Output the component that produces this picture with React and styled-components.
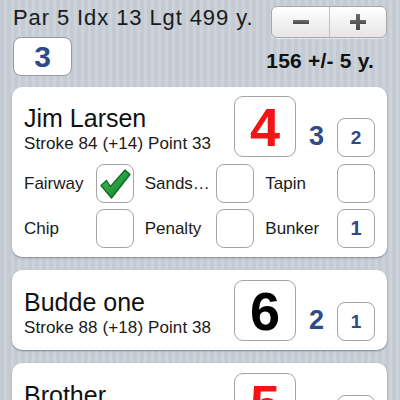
import React from "react";
import styled, { createGlobalStyle } from "styled-components";

const Global = createGlobalStyle`
  html, body { margin: 0; padding: 0; }
  body {
    width: 400px;
    height: 400px;
    overflow: hidden;
    font-family: "Liberation Sans", Arial, sans-serif;
    color: #111;
    background: repeating-linear-gradient(90deg, #c4cbd3 0px, #c4cbd3 4px, #ccd3da 4px, #ccd3da 7px);
  }
`;

const Page = styled.div`
  display: flex;
  flex-direction: column;
  gap: 13px;
  padding: 0 13px 0 12px;
`;

const Header = styled.div`
  display: flex;
  justify-content: space-between;
  align-items: flex-start;
  padding-top: 5px;
  margin-bottom: -2px;
`;

const HeaderLeft = styled.div`
  display: flex;
  flex-direction: column;
  gap: 7px;
  padding-left: 1px;
`;

const Title = styled.div`
  font-size: 22px;
  line-height: 25px;
  letter-spacing: 0.9px;
  white-space: nowrap;
  color: #1a1a1a;
`;

const HoleBox = styled.div`
  width: 57px;
  height: 37px;
  border: 1px solid #9a9a9a;
  border-radius: 8px;
  background: #fff;
  display: flex;
  align-items: center;
  justify-content: center;
  font-weight: bold;
  font-size: 30px;
  color: #2d4b86;
`;

const HeaderRight = styled.div`
  display: flex;
  flex-direction: column;
  align-items: flex-end;
  gap: 11px;
  padding-top: 1px;
`;

const Stepper = styled.div`
  width: 114px;
  height: 30px;
  border: 1px solid #a8a8a8;
  border-radius: 6px;
  background: linear-gradient(#ffffff, #e6e6e6);
  display: grid;
  grid-template-columns: 1fr 1fr;
  overflow: hidden;
  box-shadow: 0 1px 0 rgba(255,255,255,0.5);
`;

const StepButton = styled.div`
  display: flex;
  align-items: center;
  justify-content: center;
  border-left: ${(p) => (p.$divided ? "1px solid #c2c2c2" : "none")};
`;

const Distance = styled.div`
  font-weight: bold;
  font-size: 21px;
  line-height: 23px;
  letter-spacing: 0.2px;
  padding-right: 13px;
  white-space: nowrap;
  color: #111;
`;

const Card = styled.div`
  background: #fff;
  border-radius: 10px;
  box-shadow: 0 1px 2px rgba(0, 0, 0, 0.35);
  padding: ${(p) => (p.$expanded ? "9px 12px 9px 12px" : "10px 12px 9px 12px")};
  display: flex;
  flex-direction: column;
  gap: 7px;
`;

const TopRow = styled.div`
  display: flex;
  align-items: flex-end;
`;

const NameBlock = styled.div`
  flex: 1;
  display: flex;
  flex-direction: column;
  padding-bottom: 3px;
  white-space: nowrap;
`;

const Name = styled.div`
  font-size: 25px;
  line-height: 29px;
  color: #111;
`;

const Stats = styled.div`
  font-size: 17px;
  line-height: 21px;
  letter-spacing: 0.1px;
  color: #1a1a1a;
`;

const ScoreBox = styled.div`
  width: 60px;
  height: 59px;
  border: 1px solid #a4a4a4;
  border-radius: 9px;
  display: flex;
  align-items: center;
  justify-content: center;
  font-weight: bold;
  font-size: 54px;
  color: ${(p) => p.$color};
`;

const Putts = styled.div`
  width: 41px;
  text-align: center;
  font-weight: bold;
  font-size: 27px;
  line-height: 27px;
  padding-bottom: 7px;
  color: #2d4b86;
`;

const SmallBox = styled.div`
  width: 36px;
  height: 37px;
  border: 1px solid #a4a4a4;
  border-radius: 8px;
  display: flex;
  align-items: center;
  justify-content: center;
  font-weight: bold;
  font-size: 19px;
  color: #2d4b86;
  background: #fff;
`;

const OptionGrid = styled.div`
  display: grid;
  grid-template-columns: repeat(3, 1fr);
  column-gap: 11px;
  row-gap: 6px;
`;

const Option = styled.div`
  display: flex;
  align-items: center;
  justify-content: space-between;
  min-width: 0;
`;

const OptionLabel = styled.div`
  font-size: 17px;
  color: #1a1a1a;
  white-space: nowrap;
  overflow: hidden;
  text-overflow: ellipsis;
  flex: 1;
  min-width: 0;
  padding-right: 4px;
`;

const Check = styled.div`
  flex: none;
  width: 36px;
  height: 37px;
  border: 1px solid #a4a4a4;
  border-radius: 8px;
  display: flex;
  align-items: center;
  justify-content: center;
  font-weight: bold;
  font-size: 20px;
  color: #2d4b86;
  background: #fff;
`;

const MinusIcon = () => (
  <svg width="18" height="18" viewBox="0 0 18 18">
    <defs>
      <linearGradient id="ig" x1="0" y1="0" x2="0" y2="1">
        <stop offset="0" stopColor="#6a6a6a" />
        <stop offset="1" stopColor="#4a4a4a" />
      </linearGradient>
    </defs>
    <rect x="1" y="7" width="16" height="4" rx="0.5" fill="url(#ig)" />
  </svg>
);

const PlusIcon = () => (
  <svg width="18" height="18" viewBox="0 0 18 18">
    <rect x="1" y="7" width="16" height="4" rx="0.5" fill="url(#ig)" />
    <rect x="7" y="1" width="4" height="16" rx="0.5" fill="url(#ig)" />
  </svg>
);

const CheckMark = () => (
  <svg width="36" height="37" viewBox="0 0 36 37">
    <defs>
      <linearGradient id="cg" x1="0" y1="0" x2="1" y2="1">
        <stop offset="0" stopColor="#4cc45e" />
        <stop offset="0.6" stopColor="#21973a" />
        <stop offset="1" stopColor="#137a2a" />
      </linearGradient>
    </defs>
    <path
      d="M4 20.5 L9.5 15.5 L13.5 21.5 L28 5 L33 9.5 L14.5 33 Z"
      fill="url(#cg)"
      stroke="#0f6a24"
      strokeWidth="1.3"
      strokeLinejoin="round"
    />
  </svg>
);

const players = [
  {
    name: "Jim Larsen",
    stats: "Stroke 84 (+14) Point 33",
    score: "4",
    color: "#f41414",
    putts: "3",
    small: "2",
    expanded: true,
  },
  {
    name: "Budde one",
    stats: "Stroke 88 (+18) Point 38",
    score: "6",
    color: "#000",
    putts: "2",
    small: "1",
  },
  {
    name: "Brother",
    stats: "Stroke 90 (+20) Point 35",
    score: "5",
    color: "#f41414",
    putts: "2",
    small: "1",
  },
];

const options = [
  { label: "Fairway", check: true },
  { label: "Sandsave", value: "" },
  { label: "Tapin", value: "" },
  { label: "Chip", value: "" },
  { label: "Penalty", value: "" },
  { label: "Bunker", value: "1" },
];

export default function App() {
  return (
    <>
      <Global />
      <Page>
        <Header>
          <HeaderLeft>
            <Title>Par 5 Idx 13 Lgt 499 y.</Title>
            <HoleBox>3</HoleBox>
          </HeaderLeft>
          <HeaderRight>
            <Stepper>
              <StepButton>
                <MinusIcon />
              </StepButton>
              <StepButton $divided>
                <PlusIcon />
              </StepButton>
            </Stepper>
            <Distance>156 +/- 5 y.</Distance>
          </HeaderRight>
        </Header>
        {players.map((p) => (
          <Card key={p.name} $expanded={p.expanded}>
            <TopRow>
              <NameBlock>
                <Name>{p.name}</Name>
                <Stats>{p.stats}</Stats>
              </NameBlock>
              <ScoreBox $color={p.color}>{p.score}</ScoreBox>
              <Putts>{p.putts}</Putts>
              <SmallBox>{p.small}</SmallBox>
            </TopRow>
            {p.expanded && (
              <OptionGrid>
                {options.map((o) => (
                  <Option key={o.label}>
                    <OptionLabel>{o.label}</OptionLabel>
                    <Check>{o.check ? <CheckMark /> : o.value}</Check>
                  </Option>
                ))}
              </OptionGrid>
            )}
          </Card>
        ))}
      </Page>
    </>
  );
}
